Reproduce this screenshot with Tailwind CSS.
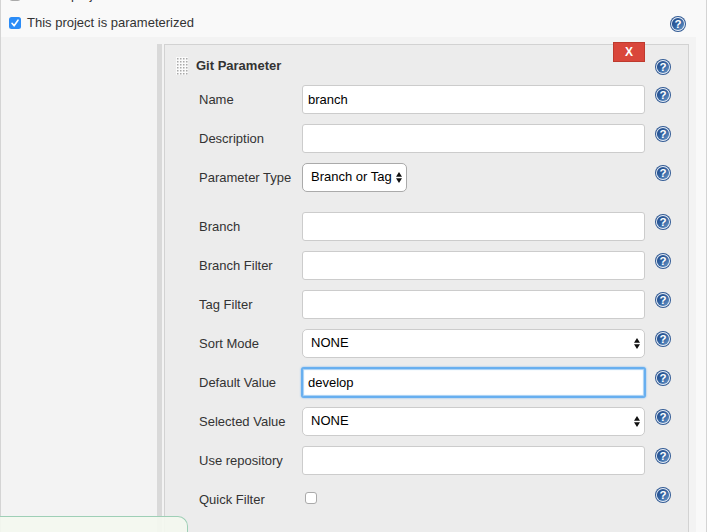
<!DOCTYPE html>
<html lang="en">
<head>
<meta charset="utf-8">
<title>Project configuration</title>
<script src="https://cdn.jsdelivr.net/npm/@tailwindcss/browser@4"></script>
</head>
<body class="bg-white">
<svg class="absolute size-0">
  <defs>
    <linearGradient id="blue" x1="0" y1="0" x2="1" y2="1"><stop offset="0" stop-color="#1f4583"/><stop offset=".5" stop-color="#3264a3"/><stop offset="1" stop-color="#6f9cca"/></linearGradient>
    <pattern id="dots" width="3" height="3" patternUnits="userSpaceOnUse"><rect width="3" height="3" fill="#fafafa"/><rect x="1" y="1" width="1.5" height="1.5" fill="#a9a9a9"/></pattern>
  </defs>
  <symbol id="help" viewBox="0 0 16 16">
    <circle cx="8" cy="8" r="8" fill="#315a94"/><circle cx="8" cy="8" r="7" fill="#e9eff7"/><circle cx="8" cy="8" r="6.1" fill="url(#blue)"/>
    <text x="8" y="12.1" text-anchor="middle" font-family="Liberation Sans, sans-serif" font-weight="700" font-size="11.5" letter-spacing="0" fill="#fff">?</text>
  </symbol>
  <symbol id="updown" viewBox="0 0 6 11"><path d="M3 0 6 4.8H0zM0 6.2h6L3 11z" fill="#111"/></symbol>
</svg>
<div class="relative w-[708px] h-[532px] overflow-hidden font-['Liberation_Sans',Arial,sans-serif] text-[13px] leading-[15px] text-[#333]">
  <div class="w-[707px] h-full flex flex-col bg-[#f9f9f9] border-x border-[#d4d4d4]">
    <div class="h-[37px] shrink-0 flex flex-col pl-2">
      <div class="h-[15px] -mt-[13px] flex gap-[6px] shrink-0">
        <span class="size-3 mt-[2px] rounded-[3px] border border-[#aaa] bg-white"></span><span>GitHub project</span>
      </div>
      <div class="flex mt-[13px] shrink-0">
        <svg class="w-3 h-3 mt-[2px]" viewBox="0 0 12 12"><rect width="12" height="12" rx="2.5" fill="#2b8cf7"/><path d="M3 6.3 5.1 8.8 9 3.2" fill="none" stroke="#fff" stroke-width="1.6" stroke-linecap="round" stroke-linejoin="round"/></svg>
        <span class="ml-[6px]">This project is parameterized</span>
        <svg class="size-4 ml-auto mr-[20px] mt-px"><use href="#help"/></svg>
      </div>
    </div>
    <div class="w-[695px] grow flex bg-[#f3f3f3] pt-[7px] pl-[156px]">
      <div class="w-[5px] bg-[#d9d9d9]"></div>
      <div class="relative ml-[2px] w-[525px] border-t border-x border-[#d2d2d2] bg-[#ececec]">
        <button class="absolute left-[448px] -top-[3px] w-8 h-5 bg-[#d9463b] border border-[#be3a2e] text-white font-bold text-[12px] leading-[18px]">X</button>
        <div class="h-10 flex pt-3 pl-[11px] pr-[17px]">
          <svg class="w-3 h-[18px]"><rect width="12" height="18" fill="url(#dots)"/></svg>
          <b class="ml-2 mt-[1px]">Git Parameter</b>
          <svg class="size-4 ml-auto mt-[2px]"><use href="#help"/></svg>
        </div>
        <div class="pl-[34px] pr-[17px]">
          <div class="h-[39px] flex"><label class="w-[103px] pt-[7px]">Name</label><div class="w-[343px] h-[29px] bg-white border border-[#ccc] rounded-[3px] px-[5px] leading-[27px] text-black">branch</div><svg class="size-4 ml-auto mt-[2px]"><use href="#help"/></svg></div>
          <div class="h-[39px] flex"><label class="w-[103px] pt-[7px]">Description</label><div class="w-[343px] h-[29px] bg-white border border-[#ccc] rounded-[3px]"></div><svg class="size-4 ml-auto mt-[2px]"><use href="#help"/></svg></div>
          <div class="h-[49px] flex"><label class="w-[103px] pt-[7px] whitespace-nowrap">Parameter Type</label><div class="w-[105px] h-[29px] bg-white border border-[#aaa] rounded-[5px] pl-2 pr-[4px] leading-[26px] text-black flex items-center justify-between whitespace-nowrap"><span class="h-[27px]">Branch or Tag</span><svg class="w-[6px] h-[11px]"><use href="#updown"/></svg></div><svg class="size-4 ml-auto mt-[2px]"><use href="#help"/></svg></div>
          <div class="h-[39px] flex"><label class="w-[103px] pt-[7px]">Branch</label><div class="w-[343px] h-[29px] bg-white border border-[#ccc] rounded-[3px]"></div><svg class="size-4 ml-auto mt-[2px]"><use href="#help"/></svg></div>
          <div class="h-[39px] flex"><label class="w-[103px] pt-[7px]">Branch Filter</label><div class="w-[343px] h-[29px] bg-white border border-[#ccc] rounded-[3px]"></div><svg class="size-4 ml-auto mt-[2px]"><use href="#help"/></svg></div>
          <div class="h-[39px] flex"><label class="w-[103px] pt-[7px]">Tag Filter</label><div class="w-[343px] h-[29px] bg-white border border-[#ccc] rounded-[3px]"></div><svg class="size-4 ml-auto mt-[2px]"><use href="#help"/></svg></div>
          <div class="h-[39px] flex"><label class="w-[103px] pt-[7px]">Sort Mode</label><div class="w-[343px] h-[29px] bg-white border border-[#ccc] rounded-[5px] pl-2 pr-[4px] leading-[26px] text-black flex items-center justify-between"><span class="h-[27px]">NONE</span><svg class="w-[6px] h-[11px]"><use href="#updown"/></svg></div><svg class="size-4 ml-auto mt-[2px]"><use href="#help"/></svg></div>
          <div class="h-[39px] flex"><label class="w-[103px] pt-[7px]">Default Value</label><div class="w-[343px] h-[29px] bg-white border border-[#66afef] rounded-[2px] px-[5px] leading-[27px] text-black shadow-[0_0_0_1px_#69aff0,0_0_2px_1px_#69aff0,inset_0_0_1px_1px_#a5cff6]">develop</div><svg class="size-4 ml-auto mt-[2px]"><use href="#help"/></svg></div>
          <div class="h-[39px] flex"><label class="w-[103px] pt-[7px]">Selected Value</label><div class="w-[343px] h-[29px] bg-white border border-[#ccc] rounded-[5px] pl-2 pr-[4px] leading-[26px] text-black flex items-center justify-between"><span class="h-[27px]">NONE</span><svg class="w-[6px] h-[11px]"><use href="#updown"/></svg></div><svg class="size-4 ml-auto mt-[2px]"><use href="#help"/></svg></div>
          <div class="h-[39px] flex"><label class="w-[103px] pt-[7px]">Use repository</label><div class="w-[343px] h-[29px] bg-white border border-[#ccc] rounded-[3px]"></div><svg class="size-4 ml-auto mt-[2px]"><use href="#help"/></svg></div>
          <div class="h-[39px] flex"><label class="w-[103px] pt-[7px]">Quick Filter</label><span class="size-3 ml-[3px] mt-[7px] bg-white border border-[#aaa] rounded-[3px]"></span><svg class="size-4 ml-auto mt-[2px]"><use href="#help"/></svg></div>
        </div>
      </div>
    </div>
  </div>
  <div class="absolute left-0 top-[516px] w-[188px] h-5 rounded-tr-[10px] border-t border-r border-[#9ecfb6] bg-[#f4f8ef]/90"></div>
</div>
</body>
</html>
